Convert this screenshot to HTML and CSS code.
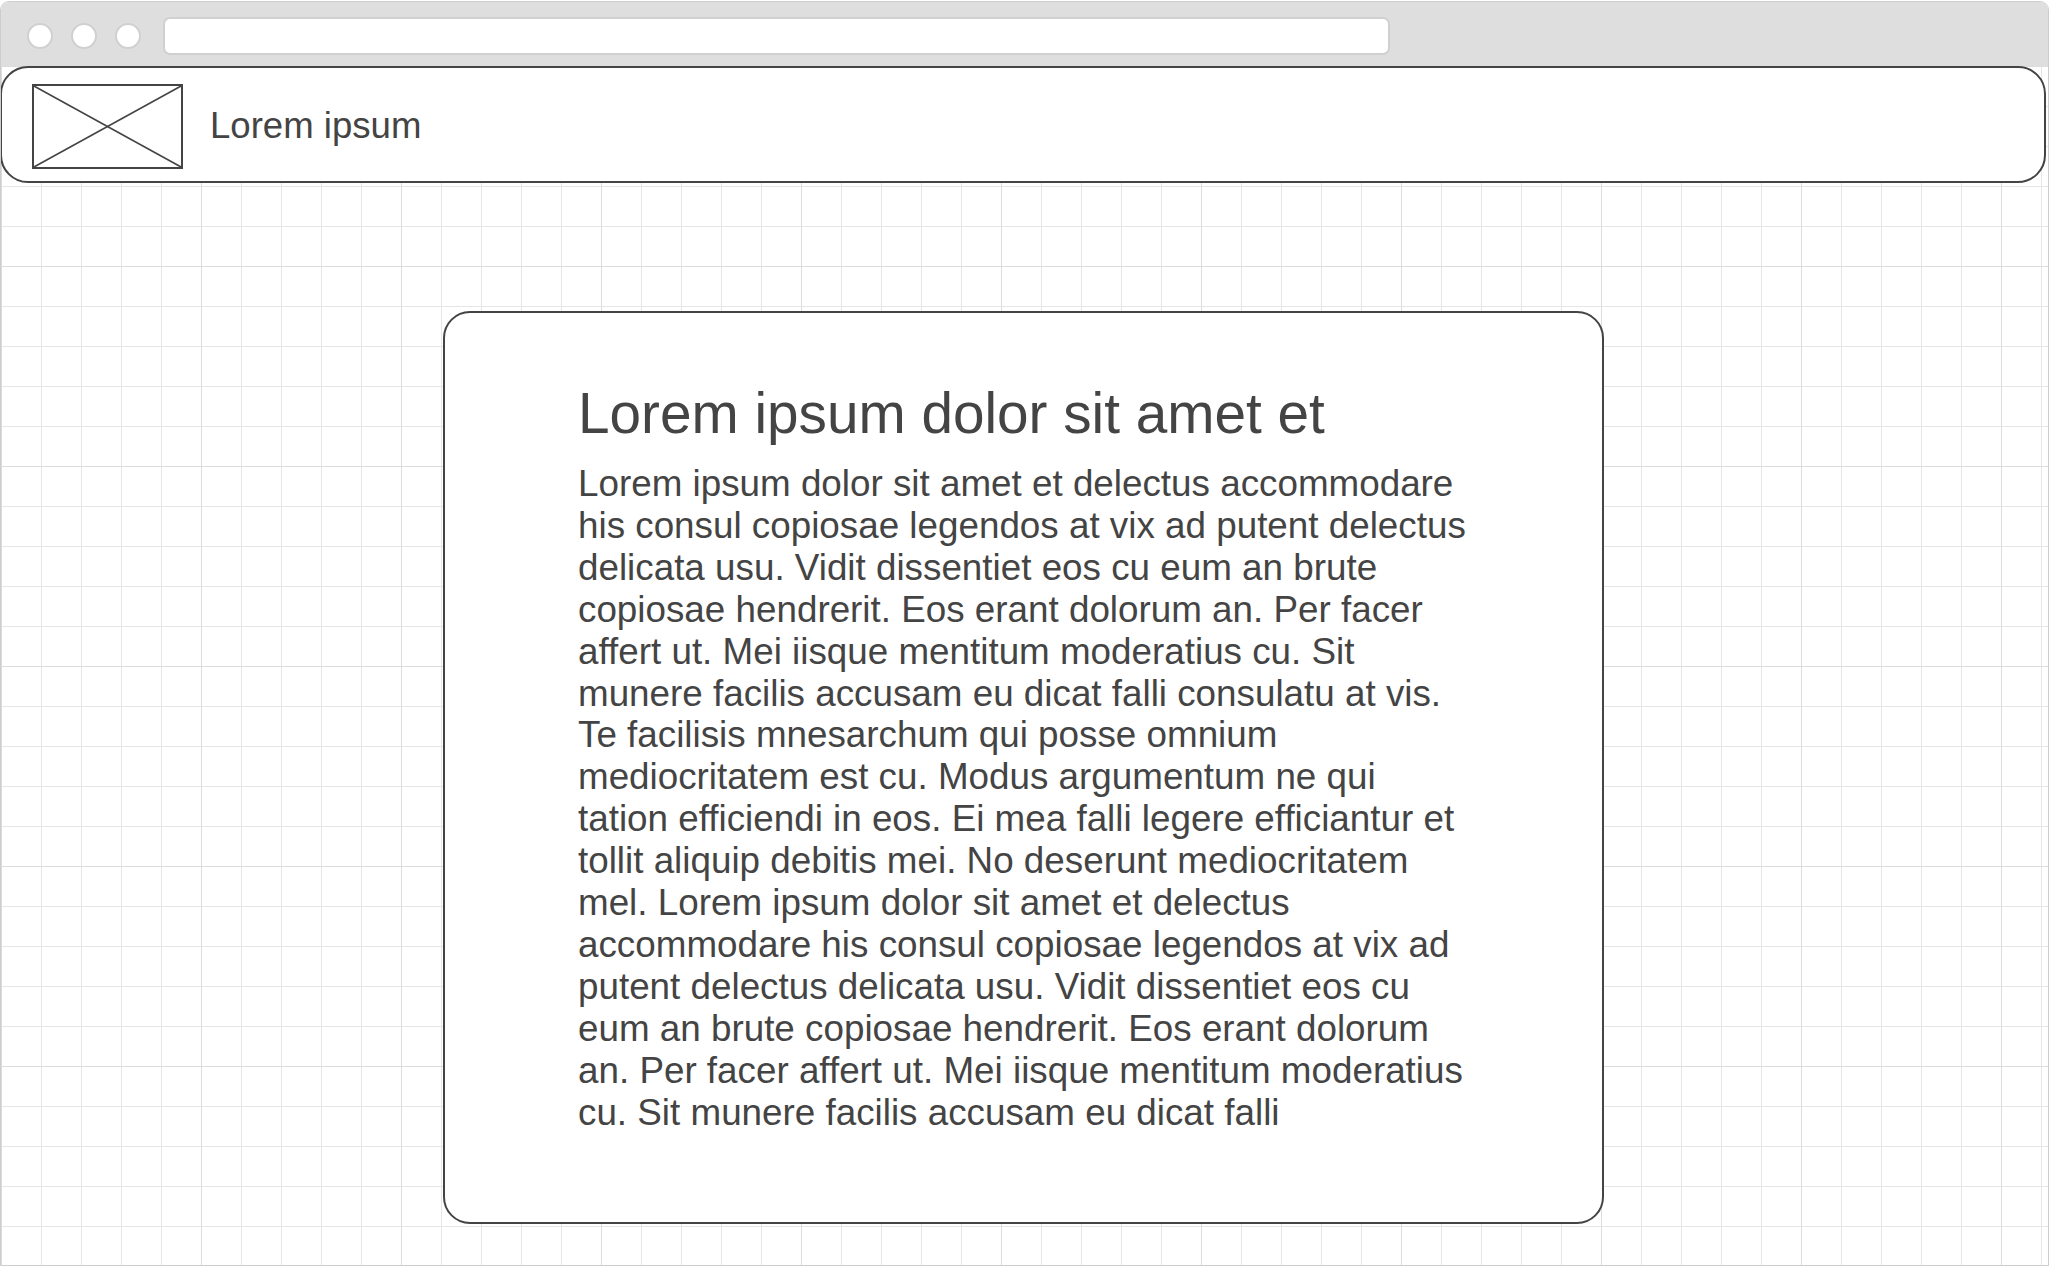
FILE: index.html
```html
<!DOCTYPE html>
<html lang="en">
<head>
    <meta charset="UTF-8">
    <meta name="viewport" content="width=device-width, initial-scale=1.0">
    <title>Wireframe</title>
    <link rel="stylesheet" href="styles.css">
</head>
<body>
    <div class="window">
        <div class="chrome">
            <div class="dots">
                <span class="dot"></span>
                <span class="dot"></span>
                <span class="dot"></span>
            </div>
            <div class="address"></div>
        </div>

        <div class="viewport">
            <div class="site-header">
                <div class="logo">
                    <svg viewBox="0 0 100 100" preserveAspectRatio="none">
                        <line x1="0" y1="0" x2="100" y2="100" vector-effect="non-scaling-stroke"/>
                        <line x1="100" y1="0" x2="0" y2="100" vector-effect="non-scaling-stroke"/>
                    </svg>
                </div>
                <span class="site-title">Lorem ipsum</span>
            </div>

            <div class="card">
                <div class="card-body">
                    <h1>Lorem ipsum dolor sit amet et</h1>
                    <p>Lorem ipsum dolor sit amet et delectus accommodare his consul copiosae legendos at vix ad putent delectus delicata usu. Vidit dissentiet eos cu eum an brute copiosae hendrerit. Eos erant dolorum an. Per facer affert ut. Mei iisque mentitum moderatius cu. Sit munere facilis accusam eu dicat falli consulatu at vis. Te facilisis mnesarchum qui posse omnium mediocritatem est cu. Modus argumentum ne qui tation efficiendi in eos. Ei mea falli legere efficiantur et tollit aliquip debitis mei. No deserunt mediocritatem mel. Lorem ipsum dolor sit amet et delectus accommodare his consul copiosae legendos at vix ad putent delectus delicata usu. Vidit dissentiet eos cu eum an brute copiosae hendrerit. Eos erant dolorum an. Per facer affert ut. Mei iisque mentitum moderatius cu. Sit munere facilis accusam eu dicat falli</p>
                </div>
            </div>
        </div>
    </div>
</body>
</html>
```

FILE: styles.css
```css
html, body {
    margin: 0;
    padding: 0;
    background: #fff;
}
body {
    font-family: 'Liberation Sans', Arial, sans-serif;
    color: #444;
}
.window {
    width: 2049px;
    height: 1265px;
    margin-top: 1px;
    box-sizing: border-box;
    border: 1px solid #cdcdcd;
    border-radius: 9px 9px 0 0;
    display: flex;
    flex-direction: column;
    overflow: hidden;
}
.chrome {
    height: 64px;
    flex: none;
    background: #dedede;
    display: flex;
    align-items: center;
    padding: 4px 0 0 26px;
    box-sizing: border-box;
}
.dots {
    display: flex;
    gap: 18px;
}
.dot {
    width: 26px;
    height: 26px;
    box-sizing: border-box;
    border-radius: 50%;
    background: #fff;
    border: 2px solid #d0d0d0;
}
.address {
    width: 1227px;
    height: 38px;
    margin-left: 22px;
    box-sizing: border-box;
    background: #fff;
    border: 2px solid #d0d0d0;
    border-radius: 7px;
}
.viewport {
    flex: 1;
    background-color: #fff;
    background-image:
        linear-gradient(to right, #dcdcdc 1px, transparent 1px),
        linear-gradient(to bottom, #dcdcdc 1px, transparent 1px),
        linear-gradient(to right, #e6e6e6 1px, transparent 1px),
        linear-gradient(to bottom, #e6e6e6 1px, transparent 1px);
    background-size: 200px 200px, 200px 200px, 40px 40px, 40px 40px;
    display: flex;
    flex-direction: column;
}
.site-header {
    height: 117px;
    margin: 0 2px 0 -1px;
    box-sizing: border-box;
    background: #fff;
    border: 2px solid #444;
    border-radius: 28px;
    display: flex;
    align-items: center;
    padding: 4px 0 0 30px;
}
.logo {
    width: 151px;
    height: 85px;
    box-sizing: border-box;
    border: 2px solid #444;
    flex: none;
}
.logo svg {
    display: block;
    width: 100%;
    height: 100%;
}
.logo line {
    stroke: #444;
    stroke-width: 1.6;
}
.site-title {
    margin-left: 27px;
    font-size: 36.6px;
    line-height: 42px;
    margin-top: -2px;
}
.card {
    width: 1161px;
    height: 913px;
    margin: 128px 0 0 442px;
    box-sizing: border-box;
    background: #fff;
    border: 2px solid #444;
    border-radius: 27px;
    padding: 68px 0 0 133px;
}
.card-body {
    width: 892px;
}
h1 {
    margin: 0 0 17px;
    font-size: 56.7px;
    font-weight: normal;
    line-height: 65px;
}
p {
    margin: 0;
    font-size: 36.8px;
    line-height: 41.9px;
}
```
